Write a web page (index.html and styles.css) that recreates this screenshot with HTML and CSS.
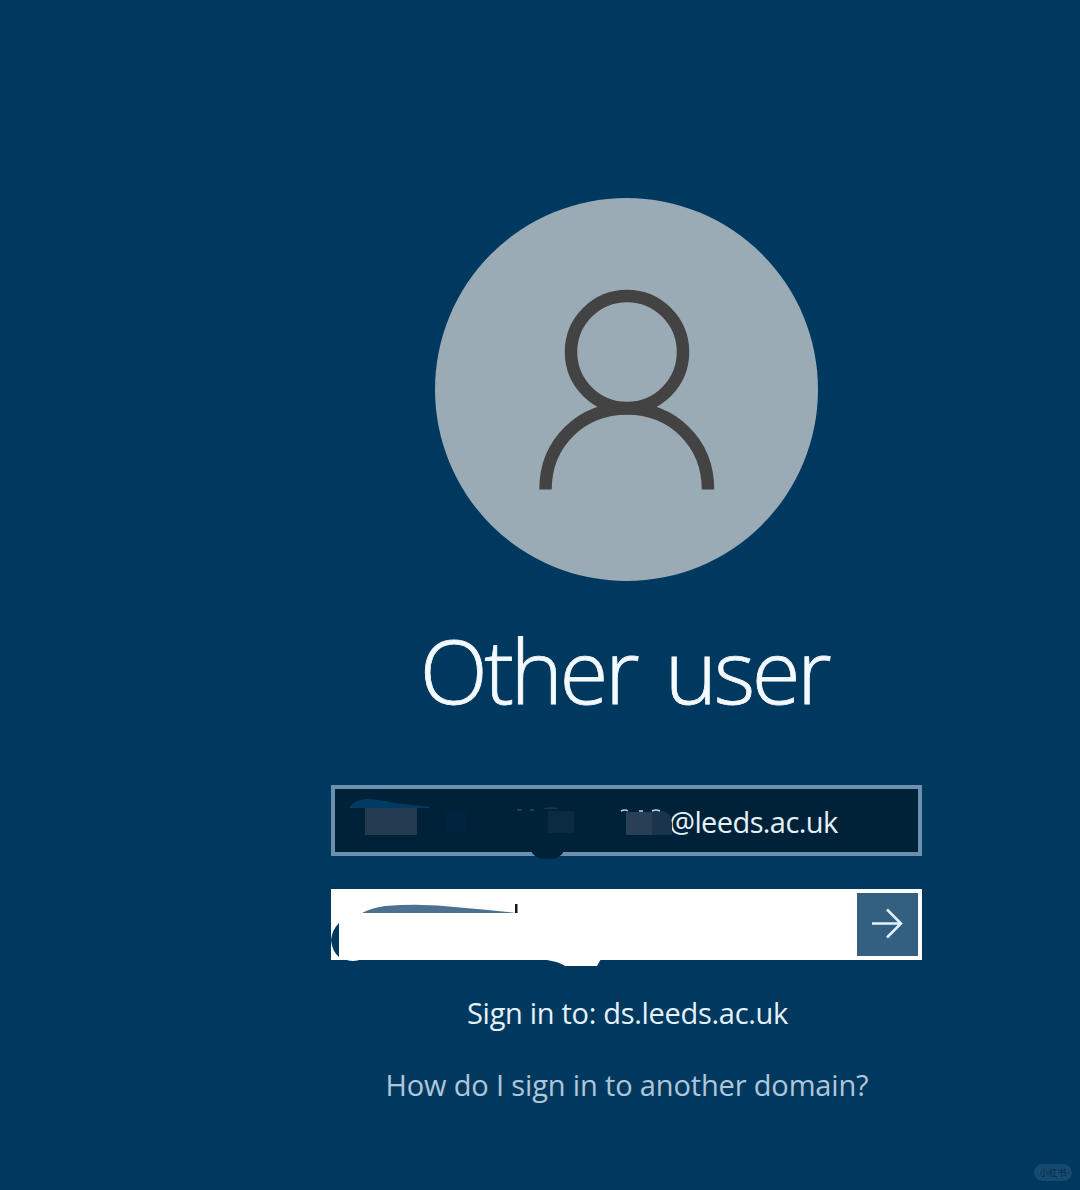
FILE: index.html
```
<!DOCTYPE html>
<html lang="en">
<head>
  <meta charset="UTF-8">
  <meta name="viewport" content="width=device-width, initial-scale=1.0">
  <title>Sign in</title>
  <link rel="stylesheet" href="styles.css">
</head>
<body>

  <main class="login">
    <div class="avatar">
      <svg viewBox="0 0 383 383" fill="none" stroke="#434343" stroke-width="12.5">
        <circle cx="192" cy="154" r="56"/>
        <path d="M110.500 291.500C110.500 244 147 210.500 192 210.500S273 244 273 291.500"/>
      </svg>
    </div>

    <h1 class="title">Other user</h1>

    <div class="field username">
      <span class="email">@leeds.ac.uk</span>
      <!-- Hidden part of the user name -->
      <svg class="marks" viewBox="0 0 590 80">
        <path fill="#003b63" d="M17 23Q22 15 33 14Q46 14 62 18L98 22V23Z"/>
        <path fill="#233b51" d="M33 23H85V50H33Z"/>
        <path fill="#00243f" d="M114 26H134V48H114Z"/>
        <path fill="#0c2b42" d="M216 26H242V48H216Z"/>
        <path fill="#123550" d="M210 24Q218 20 227 24Z"/>
        <path fill="#1a344b" d="M320 26H332Q339 29 340 38V50H320Z"/>
        <path fill="#293f55" d="M294 27H320V50H294Z"/>
        <path stroke="#c1d1df" stroke-width="1.500" d="M289 26Q293 24 296 26M307 26H311M320 26Q324 24 328 26" fill="none"/>
        <path stroke="#405c71" stroke-width="1" d="M185 25H190M198 25H202"/>
        <path fill="#002238" d="M200 66H231V68Q226 74 218 74H213Q205 74 200 68Z"/>
      </svg>
    </div>

    <div class="field password">
      <button class="submit-btn" type="button" aria-label="Submit">
        <svg viewBox="0 0 61 63" fill="none" stroke="#e5f1fa" stroke-width="2.500">
          <path d="M15 30.500H44M30 16.500L44 30.500L30 44.500"/>
        </svg>
      </button>
      <svg class="marks" viewBox="0 0 590 80">
        <path fill="#4c7190" d="M30 24Q39 19 53 17Q91 14 128 18.500Q158 21 184 24Z"/>
        <path fill="#111820" d="M183 15H185.500V24H183Z"/>
        <path fill="#003960" d="M7 34V68Q0 62-1 51Q0 41 7 34Z"/>
        <path fill="#fff" d="M12 70H30Q21 74 12 70ZM215 70H269L265 77H233Q228 73 215 71Z"/>
      </svg>
    </div>

    <p class="domain">Sign in to: ds.leeds.ac.uk</p>
    <a class="help">How do I sign in to another domain?</a>
  </main>

  <span class="badge">小红书</span>

</body>
</html>
```

FILE: styles.css
```
* {
  margin: 0;
  padding: 0;
  box-sizing: border-box;
}

body {
  width: 1080px;
  height: 1190px;
  overflow: hidden;
  background-color: #003960;
  color: #fff;
  font-family: "Open Sans", "Noto Sans", sans-serif;
}

.login {
  width: 591px;
  margin-left: 331px;
  padding-top: 198px;
  display: flex;
  flex-direction: column;
  align-items: center;
}

.avatar {
  width: 383px;
  height: 383px;
  border-radius: 50%;
  background-color: #9babb6;
}

.avatar svg,
.submit-btn svg {
  display: block;
}

.title {
  height: 120px;
  margin-top: 29px;
  padding-right: 5px;
  color: #f4f9fd;
  font-size: 89px;
  font-weight: 300;
  line-height: 120px;
  letter-spacing: -3.5px;
  word-spacing: 9px;
  white-space: nowrap;
  -webkit-text-stroke: 0.8px #f4f9fd;
}

.field {
  position: relative;
  width: 591px;
  height: 71px;
}

.username {
  display: flex;
  align-items: center;
  margin-top: 55px;
  padding-top: 2px;
  padding-left: 334px;
  border: 4px solid #6d90ae;
  background-color: #002238;
}

.email {
  color: #e5f1fa;
  font-size: 29px;
  letter-spacing: -0.6px;
  white-space: nowrap;
}

/* Drawn over the field, its border included */
.marks {
  position: absolute;
  top: 0;
  left: 1px;
  width: 590px;
  height: 80px;
  overflow: visible;
  pointer-events: none;
}

.username .marks {
  top: -4px;
  left: -3px;
}

.password {
  display: flex;
  justify-content: flex-end;
  margin-top: 33px;
  padding: 4px;
  background-color: #fff;
}

.submit-btn {
  width: 61px;
  height: 63px;
  border: none;
  background-color: #335f80;
  cursor: pointer;
}

.domain {
  margin-top: 33px;
  padding-left: 2px;
  color: #e5f1fa;
  font-size: 29px;
  line-height: 40px;
  letter-spacing: -0.3px;
  white-space: nowrap;
}

.help {
  margin-top: 32px;
  padding-left: 1px;
  color: #b0c6d9;
  font-size: 29px;
  line-height: 40px;
  letter-spacing: -0.15px;
  white-space: nowrap;
}

.badge {
  position: absolute;
  right: 8px;
  bottom: 9px;
  width: 38px;
  height: 17px;
  border-radius: 9px;
  background-color: #164a70;
  color: #062d4d;
  font-family: "Noto Sans CJK SC", sans-serif;
  font-size: 9px;
  line-height: 17px;
  text-align: center;
}
```
